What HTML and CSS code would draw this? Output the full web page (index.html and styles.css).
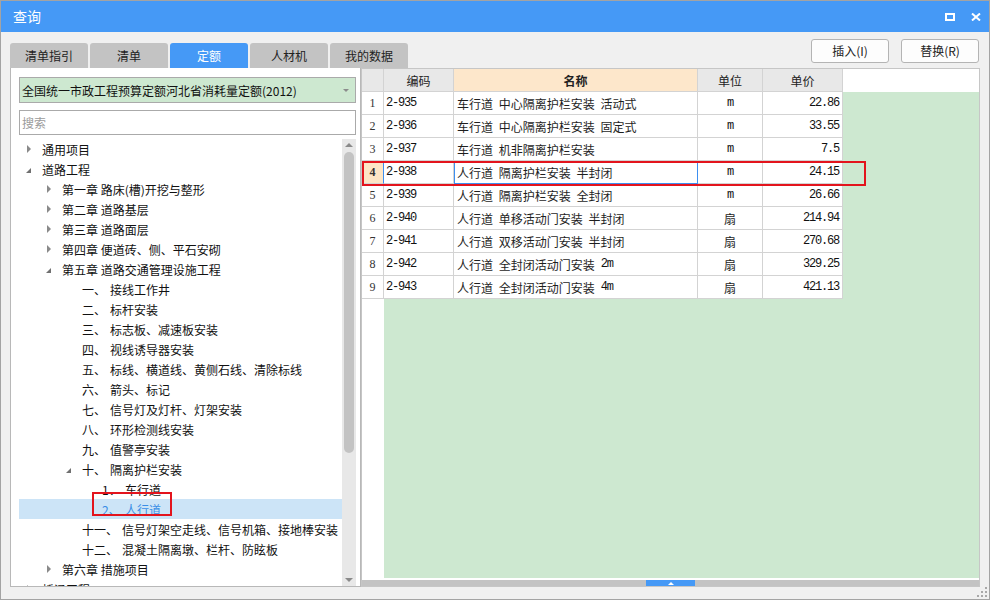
FILE: index.html
```html
<!DOCTYPE html>
<html lang="zh-CN">
<head>
<meta charset="utf-8">
<title>查询</title>
<link rel="stylesheet" href="styles.css">
</head>
<body>
<div class="window">
  <div class="titlebar">
    <span class="title">查询</span>
    <div class="win-ctrls">
      <svg class="ic-max" width="10" height="8" viewBox="0 0 10 8"><rect x="1" y="1" width="8" height="6" fill="none" stroke="#fff" stroke-width="2"/></svg>
      <svg class="ic-close" width="10" height="8" viewBox="0 0 10 8"><path d="M1 0.5 L9 7.5 M9 0.5 L1 7.5" stroke="#fff" stroke-width="2" fill="none"/></svg>
    </div>
  </div>
  <div class="body">
    <div class="toolbar">
      <div class="tabs">
        <div class="tab">清单指引</div>
        <div class="tab">清单</div>
        <div class="tab active">定额</div>
        <div class="tab">人材机</div>
        <div class="tab">我的数据</div>
      </div>
      <div class="actions">
        <button class="btn">插入(I)</button>
        <button class="btn">替换(R)</button>
      </div>
    </div>
    <div class="main">
      <div class="left">
        <div class="select"><span>全国统一市政工程预算定额河北省消耗量定额(2012)</span><i class="caret"></i></div>
        <div class="search">搜索</div>
        <div class="tree-wrap">
          <div class="tree">
            <div class="node l0"><span class="tog"><i class="tri-r"></i></span><span>通用项目</span></div>
            <div class="node l0"><span class="tog"><i class="tri-d"></i></span><span>道路工程</span></div>
            <div class="node l1"><span class="tog"><i class="tri-r"></i></span><span>第一章 路床(槽)开挖与整形</span></div>
            <div class="node l1"><span class="tog"><i class="tri-r"></i></span><span>第二章 道路基层</span></div>
            <div class="node l1"><span class="tog"><i class="tri-r"></i></span><span>第三章 道路面层</span></div>
            <div class="node l1"><span class="tog"><i class="tri-r"></i></span><span>第四章 便道砖、侧、平石安砌</span></div>
            <div class="node l1"><span class="tog"><i class="tri-d"></i></span><span>第五章 道路交通管理设施工程</span></div>
            <div class="node l2"><span class="tog"></span><span class="num">一、</span><span>接线工作井</span></div>
            <div class="node l2"><span class="tog"></span><span class="num">二、</span><span>标杆安装</span></div>
            <div class="node l2"><span class="tog"></span><span class="num">三、</span><span>标志板、减速板安装</span></div>
            <div class="node l2"><span class="tog"></span><span class="num">四、</span><span>视线诱导器安装</span></div>
            <div class="node l2"><span class="tog"></span><span class="num">五、</span><span>标线、横道线、黄侧石线、清除标线</span></div>
            <div class="node l2"><span class="tog"></span><span class="num">六、</span><span>箭头、标记</span></div>
            <div class="node l2"><span class="tog"></span><span class="num">七、</span><span>信号灯及灯杆、灯架安装</span></div>
            <div class="node l2"><span class="tog"></span><span class="num">八、</span><span>环形检测线安装</span></div>
            <div class="node l2"><span class="tog"></span><span class="num">九、</span><span>值警亭安装</span></div>
            <div class="node l2"><span class="tog"><i class="tri-d"></i></span><span class="num">十、</span><span>隔离护栏安装</span></div>
            <div class="node l3"><span class="tog"></span><span class="num3">1、</span><span>车行道</span></div>
            <div class="node l3 selected"><span class="tog"></span><span class="num3">2、</span><span>人行道</span></div>
            <div class="node l2"><span class="tog"></span><span class="num wide">十一、</span><span>信号灯架空走线、信号机箱、接地棒安装</span></div>
            <div class="node l2"><span class="tog"></span><span class="num wide">十二、</span><span>混凝土隔离墩、栏杆、防眩板</span></div>
            <div class="node l1"><span class="tog"><i class="tri-r"></i></span><span>第六章 措施项目</span></div>
            <div class="node l0"><span class="tog"><i class="tri-r"></i></span><span>桥涵工程</span></div>
          </div>
          <div class="vscroll">
            <i class="arr-up"></i>
            <div class="vthumb"></div>
            <div class="vspace"></div>
            <i class="arr-down"></i>
          </div>
        </div>
      </div>
      <div class="right">
        <div class="grid-view">
          <div class="row head">
            <div class="c rn"></div>
            <div class="c code">编码</div>
            <div class="c name">名称</div>
            <div class="c unit">单位</div>
            <div class="c price">单价</div>
          </div>
          <div class="row"><div class="c rn">1</div><div class="c code">2-935</div><div class="c name">车行道 中心隔离护栏安装 活动式</div><div class="c unit"><span class="mono">m</span></div><div class="c price">22.86</div></div>
          <div class="row"><div class="c rn">2</div><div class="c code">2-936</div><div class="c name">车行道 中心隔离护栏安装 固定式</div><div class="c unit"><span class="mono">m</span></div><div class="c price">33.55</div></div>
          <div class="row"><div class="c rn">3</div><div class="c code">2-937</div><div class="c name">车行道 机非隔离护栏安装</div><div class="c unit"><span class="mono">m</span></div><div class="c price">7.5</div></div>
          <div class="row hl"><div class="c rn">4</div><div class="c code">2-938</div><div class="c name">人行道 隔离护栏安装 半封闭</div><div class="c unit"><span class="mono">m</span></div><div class="c price">24.15</div></div>
          <div class="row"><div class="c rn">5</div><div class="c code">2-939</div><div class="c name">人行道 隔离护栏安装 全封闭</div><div class="c unit"><span class="mono">m</span></div><div class="c price">26.66</div></div>
          <div class="row"><div class="c rn">6</div><div class="c code">2-940</div><div class="c name">人行道 单移活动门安装 半封闭</div><div class="c unit">扇</div><div class="c price">214.94</div></div>
          <div class="row"><div class="c rn">7</div><div class="c code">2-941</div><div class="c name">人行道 双移活动门安装 半封闭</div><div class="c unit">扇</div><div class="c price">270.68</div></div>
          <div class="row"><div class="c rn">8</div><div class="c code">2-942</div><div class="c name">人行道 全封闭活动门安装<span class="mono">&nbsp;2m</span></div><div class="c unit">扇</div><div class="c price">329.25</div></div>
          <div class="row"><div class="c rn">9</div><div class="c code">2-943</div><div class="c name">人行道 全封闭活动门安装<span class="mono">&nbsp;4m</span></div><div class="c unit">扇</div><div class="c price">421.13</div></div>
        </div>
        <div class="hscroll"><div class="hthumb"><i class="hthumb-arr"></i></div></div>
      </div>
    </div>
  </div>
  <div class="grip">
    <i></i><i></i><i></i><i></i><i></i><i></i>
  </div>
</div>
</body>
</html>
```
FILE: styles.css
```css
html, body {
  margin: 0;
  padding: 0;
  background: #f0f0f0;
}
body {
  font-family: "Noto Sans CJK SC", "Microsoft YaHei", sans-serif;
  font-size: 12px;
  color: #1e1e1e;
}
.window {
  width: 990px;
  height: 600px;
  box-sizing: border-box;
  border: 1px solid #a3a3a3;
  background: #f0f0f0;
  display: flex;
  flex-direction: column;
  position: relative;
  overflow: hidden;
}
.titlebar {
  height: 31px;
  flex: none;
  background: #4599f6;
  display: flex;
  align-items: center;
  justify-content: space-between;
  padding: 0 8px 0 12px;
  color: #fff;
  font-size: 14px;
  line-height: 31px;
}
.win-ctrls {
  display: flex;
  align-items: center;
  gap: 16px;
}
.ic-max { display: block; }
.ic-close { display: block; }

.body {
  flex: 1;
  display: flex;
  flex-direction: column;
  padding: 7px 9px 12px 9px;
  min-height: 0;
}
.toolbar {
  height: 29px;
  flex: none;
  display: flex;
  justify-content: space-between;
}
.tabs {
  align-self: flex-end;
  display: flex;
  gap: 2px;
}
.tab {
  width: 78px;
  height: 25px;
  background: #c3c3c3;
  border-radius: 3px 3px 0 0;
  display: flex;
  align-items: center;
  justify-content: center;
  color: #222;
  font-size: 12px;
}
.tab.active {
  background: #4599f6;
  color: #fff;
}
.actions {
  align-self: flex-start;
  display: flex;
  gap: 12px;
  margin-right: 1px;
}
.btn {
  width: 78px;
  height: 24px;
  box-sizing: border-box;
  border: 1px solid #b4b4b4;
  border-radius: 3px;
  background: #fdfdfd;
  font-family: "Noto Sans CJK SC", "Microsoft YaHei", sans-serif;
  font-size: 12px;
  color: #222;
  padding: 0;
  line-height: 22px;
}

.main {
  flex: 1;
  display: flex;
  min-height: 0;
}
.left {
  width: 351px;
  flex: none;
  box-sizing: border-box;
  border: 1px solid #b8b8b8;
  border-top: none;
  background: #fff;
  padding: 9px 4px 0 8px;
  display: flex;
  flex-direction: column;
  min-height: 0;
}
.select {
  height: 26px;
  flex: none;
  box-sizing: border-box;
  border: 1px solid #aaaaaa;
  background: #cde8d0;
  display: flex;
  align-items: center;
  justify-content: space-between;
  padding: 0 6px 0 2px;
  color: #111;
  white-space: nowrap;
}
.caret {
  width: 0;
  height: 0;
  border-left: 3px solid transparent;
  border-right: 3px solid transparent;
  border-top: 3px solid #8c8c8c;
}
.search {
  height: 25px;
  flex: none;
  margin-top: 7px;
  box-sizing: border-box;
  border: 1px solid #aaaaaa;
  display: flex;
  align-items: center;
  padding-left: 2px;
  color: #9b9b9b;
}
.tree-wrap {
  flex: 1;
  margin-top: 4px;
  display: flex;
  min-height: 0;
}
.tree {
  flex: 1;
  overflow: hidden;
  min-width: 0;
}
.node {
  height: 20px;
  display: flex;
  align-items: center;
  white-space: nowrap;
  color: #111;
  position: relative;
}
.node.l0 { padding-left: 7px; }
.node.l1 { padding-left: 27px; }
.node.l2 { padding-left: 47px; }
.node.l3 { padding-left: 67px; }
.tog {
  width: 16px;
  flex: none;
  display: flex;
  align-items: center;
}
.tri-r {
  display: block;
  width: 0;
  height: 0;
  border-top: 4px solid transparent;
  border-bottom: 4px solid transparent;
  border-left: 4px solid #8a8a8a;
  margin-left: 1px;
}
.tri-d {
  display: block;
  width: 0;
  height: 0;
  border-bottom: 5px solid #707070;
  border-left: 5px solid transparent;
  margin-top: 2px;
}
.num { width: 28px; flex: none; }
.num.wide { width: 40px; }
.num3 { width: 23px; flex: none; }
.node.selected {
  background: #cce4f7;
  color: #3a8ee6;
}
.node.selected::after {
  content: "";
  position: absolute;
  left: 73px;
  top: -7px;
  width: 80px;
  height: 24px;
  box-sizing: border-box;
  border: 2px solid #e3141d;
}
.vscroll {
  width: 14px;
  flex: none;
  background: #e8e8e8;
  display: flex;
  flex-direction: column;
  align-items: center;
}
.arr-up {
  display: block;
  width: 0;
  height: 0;
  margin-top: 4px;
  border-left: 4px solid transparent;
  border-right: 4px solid transparent;
  border-bottom: 4px solid #8a8a8a;
}
.vthumb {
  width: 10px;
  height: 301px;
  margin-top: 5px;
  border-radius: 5px;
  background: #c3c3c3;
}
.vspace { flex: 1; }
.arr-down {
  display: block;
  width: 0;
  height: 0;
  margin-bottom: 4px;
  border-left: 4px solid transparent;
  border-right: 4px solid transparent;
  border-top: 4px solid #8a8a8a;
}

.right {
  flex: 1;
  box-sizing: border-box;
  border: 1px solid #c6c6c6;
  background: #fff;
  display: flex;
  flex-direction: column;
  min-width: 0;
}
.grid-view {
  flex: 1;
  background:
    linear-gradient(#fff, #fff) left top / 100% 23px no-repeat,
    linear-gradient(#fff, #fff) left top / 22px 100% no-repeat,
    #cde8d0;
}
.row {
  display: flex;
  height: 23px;
}
.c {
  box-sizing: border-box;
  height: 23px;
  border-right: 1px solid #d3d3d3;
  border-bottom: 1px solid #d3d3d3;
  background: #fff;
  display: flex;
  align-items: center;
  white-space: nowrap;
  overflow: hidden;
}
.c.rn { width: 22px; justify-content: center; font-family: "Liberation Serif", serif; font-size: 12px; color: #333; }
.c.code { width: 70px; padding-left: 2px; }
.c.name { width: 244px; padding-left: 3px; word-spacing: 3px; }
.c.unit { width: 65px; justify-content: center; }
.c.price { width: 80px; justify-content: flex-end; padding-right: 3px; }
.row:not(.head) .c.code,
.row:not(.head) .c.price,
.mono {
  font-family: "Liberation Mono", monospace;
  font-size: 12px;
  letter-spacing: -1.2px;
  word-spacing: 0;
  color: #111;
}
.row.head .c {
  background: #e8e8e8;
  justify-content: center;
  padding: 0;
  color: #222;
  font-family: "Noto Sans CJK SC", "Microsoft YaHei", sans-serif;
  font-size: 12px;
  letter-spacing: 0;
}
.row.head .c.name {
  background: #fde7cb;
  font-weight: bold;
}
.row.hl { position: relative; }
.row.hl .c.rn {
  background: #fde6c6;
  font-weight: bold;
  border-right-color: #3d8ff0;
}
.row.hl .c.name {
  border-right-color: #3d8ff0;
  border-bottom-color: #3d8ff0;
  box-shadow: inset 1px 1px 0 #3d8ff0;
}
.row.hl::after {
  content: "";
  position: absolute;
  left: 0;
  top: 0;
  width: 504px;
  height: 25px;
  box-sizing: border-box;
  border: 2px solid #e3141d;
}
.hscroll {
  height: 6px;
  flex: none;
  margin-top: 2px;
  background: #c3c3c3;
  display: flex;
}
.hthumb {
  width: 49px;
  margin-left: 284px;
  background: #4599f6;
  display: flex;
  align-items: center;
  justify-content: center;
}
.hthumb-arr {
  display: block;
  width: 0;
  height: 0;
  border-left: 3px solid transparent;
  border-right: 3px solid transparent;
  border-bottom: 3px solid #fff;
}
.grip {
  position: absolute;
  right: 2px;
  bottom: 2px;
  width: 10px;
  height: 10px;
}
.grip i {
  position: absolute;
  width: 2px;
  height: 2px;
  background: #a8a8a8;
}
.grip i:nth-child(1) { right: 0; bottom: 0; }
.grip i:nth-child(2) { right: 4px; bottom: 0; }
.grip i:nth-child(3) { right: 8px; bottom: 0; }
.grip i:nth-child(4) { right: 0; bottom: 4px; }
.grip i:nth-child(5) { right: 4px; bottom: 4px; }
.grip i:nth-child(6) { right: 0; bottom: 8px; }
```
